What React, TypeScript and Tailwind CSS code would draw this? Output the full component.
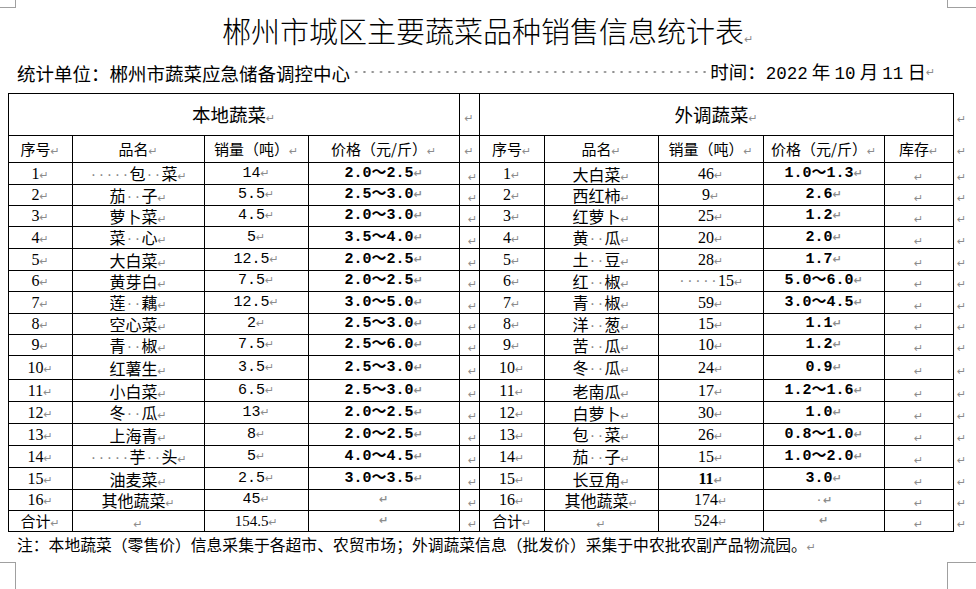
import React from "react"

const CN = "font-['Noto_Sans_CJK_SC',sans-serif]"
const SERIF = "font-['Liberation_Serif','Noto_Sans_CJK_SC',serif]"
const MONO = "font-['Liberation_Mono','Noto_Sans_CJK_SC',monospace]"

type Row = { no: string; name: string; qty: string; price: string; bold?: boolean }

const local: Row[] = [
  { no: "1", name: "·····包··菜", qty: "14", price: "2.0～2.5" },
  { no: "2", name: "茄··子", qty: "5.5", price: "2.5～3.0" },
  { no: "3", name: "萝卜菜", qty: "4.5", price: "2.0～3.0" },
  { no: "4", name: "菜··心", qty: "5", price: "3.5～4.0" },
  { no: "5", name: "大白菜", qty: "12.5", price: "2.0～2.5" },
  { no: "6", name: "黄芽白", qty: "7.5", price: "2.0～2.5" },
  { no: "7", name: "莲··藕", qty: "12.5", price: "3.0～5.0" },
  { no: "8", name: "空心菜", qty: "2", price: "2.5～3.0" },
  { no: "9", name: "青··椒", qty: "7.5", price: "2.5～6.0" },
  { no: "10", name: "红薯生", qty: "3.5", price: "2.5～3.0" },
  { no: "11", name: "小白菜", qty: "6.5", price: "2.5～3.0" },
  { no: "12", name: "冬··瓜", qty: "13", price: "2.0～2.5" },
  { no: "13", name: "上海青", qty: "8", price: "2.0～2.5" },
  { no: "14", name: "·····芋··头", qty: "5", price: "4.0～4.5" },
  { no: "15", name: "油麦菜", qty: "2.5", price: "3.0～3.5" },
  { no: "16", name: "其他蔬菜", qty: "45", price: "" },
  { no: "合计", name: "", qty: "154.5", price: "" },
]

const remote: Row[] = [
  { no: "1", name: "大白菜", qty: "46", price: "1.0～1.3" },
  { no: "2", name: "西红柿", qty: "9", price: "2.6" },
  { no: "3", name: "红萝卜", qty: "25", price: "1.2" },
  { no: "4", name: "黄··瓜", qty: "20", price: "2.0" },
  { no: "5", name: "土··豆", qty: "28", price: "1.7" },
  { no: "6", name: "红··椒", qty: "·····15", price: "5.0～6.0" },
  { no: "7", name: "青··椒", qty: "59", price: "3.0～4.5" },
  { no: "8", name: "洋··葱", qty: "15", price: "1.1" },
  { no: "9", name: "苦··瓜", qty: "10", price: "1.2" },
  { no: "10", name: "冬··瓜", qty: "24", price: "0.9" },
  { no: "11", name: "老南瓜", qty: "17", price: "1.2～1.6" },
  { no: "12", name: "白萝卜", qty: "30", price: "1.0" },
  { no: "13", name: "包··菜", qty: "26", price: "0.8～1.0" },
  { no: "14", name: "茄··子", qty: "15", price: "1.0～2.0" },
  { no: "15", name: "长豆角", qty: "11", price: "3.0", bold: true },
  { no: "16", name: "其他蔬菜", qty: "174", price: "·" },
  { no: "合计", name: "", qty: "524", price: "" },
]

const heights = [
  "h-[22px]", "h-[21px]", "h-[21px]", "h-[22px]", "h-[22px]", "h-[21px]", "h-[22px]", "h-[21px]", "h-[21px]",
  "h-[24px]", "h-[22px]", "h-[22px]", "h-[22px]", "h-[22px]", "h-[22px]", "h-[21px]", "h-[21px]",
]

function Mark() {
  return (
    <span className="inline-block w-[10px] text-left text-[11px] leading-none text-[#8c8c8c] font-['DejaVu_Sans',sans-serif]">
      ↵
    </span>
  )
}

// Word shows spaces as light dots
function Txt({ s }: { s: string }) {
  return (
    <>
      {s.split("").map((c, i) =>
        c === "·" ? (
          <span
            key={i}
            className="inline-block w-[8px] text-center leading-none font-['Liberation_Sans',sans-serif] font-normal text-[#8a8a8a]"
          >
            ·
          </span>
        ) : (
          <span key={i}>{c}</span>
        )
      )}
    </>
  )
}

const td = "border border-black text-center align-middle p-0 whitespace-nowrap"
const dig = "font-['Liberation_Mono',monospace] text-[17.5px]"

export default function App() {
  return (
    <div className={`relative w-[976px] h-[589px] bg-white text-black overflow-hidden ${CN}`}>
      {/* corner marks */}
      <div className="absolute left-0 top-0 w-[16px] h-[8px] border-r border-b border-[#a0a0a0]" />
      <div className="absolute left-[947px] top-0 w-[29px] h-[8px] border-l border-b border-[#a0a0a0]" />
      <div className="absolute left-0 top-[562px] w-[16px] h-[27px] border-r border-t border-[#a0a0a0]" />
      <div className="absolute left-[947px] top-[562px] w-[29px] h-[27px] border-l border-t border-[#a0a0a0]" />

      <div className="pt-[13px] text-center text-[29px] leading-[35px] font-light">
        郴州市城区主要蔬菜品种销售信息统计表
        <Mark />
      </div>

      <div className="mt-[11px] flex items-center pl-[17px] pr-[40px] text-[18.5px] leading-[24px]">
        <span>统计单位：郴州市蔬菜应急储备调控中心</span>
        <span className="flex-1 self-stretch bg-[radial-gradient(circle,#8a8a8a_0.9px,transparent_1.3px)] bg-[length:8.3px_24px] bg-repeat-x bg-[position:2px_1px]" />
        <span className="whitespace-nowrap">
          时间：<span className={dig}>2022</span> 年 <span className={dig}>10</span> 月{" "}
          <span className={dig}>11</span> 日
        </span>
        <Mark />
      </div>

      <table className="ml-[8px] mt-[7px] table-fixed border-collapse">
        <colgroup>
          <col className="w-[64px]" />
          <col className="w-[132px]" />
          <col className="w-[104px]" />
          <col className="w-[151px]" />
          <col className="w-[20px]" />
          <col className="w-[65px]" />
          <col className="w-[114px]" />
          <col className="w-[105px]" />
          <col className="w-[121px]" />
          <col className="w-[69px]" />
          <col className="w-[18px]" />
        </colgroup>
        <tbody>
          <tr className="h-[42px] text-[18.5px]">
            <td colSpan={4} className={td}>
              本地蔬菜
              <Mark />
            </td>
            <td className={td}>
              <Mark />
            </td>
            <td colSpan={5} className={td}>
              外调蔬菜
              <Mark />
            </td>
            <td className="p-0 pl-[3px] align-top pt-[8px]">
              <Mark />
            </td>
          </tr>
          <tr className="h-[27px] text-[15px]">
            {["序号", "品名", "销量（吨）", "价格（元/斤）"].map((h) => (
              <td key={"l" + h} className={td}>
                {h}
                <Mark />
              </td>
            ))}
            <td className={td}>
              <Mark />
            </td>
            {["序号", "品名", "销量（吨）", "价格（元/斤）", "库存"].map((h) => (
              <td key={"r" + h} className={td}>
                {h}
                <Mark />
              </td>
            ))}
            <td className="p-0 pl-[3px] align-middle">
              <Mark />
            </td>
          </tr>
          {local.map((l, i) => {
            const r = remote[i]
            const total = l.no === "合计"
            return (
              <tr key={i} className={`${heights[i]} text-[16px] leading-[18px]`}>
                <td className={`${td} ${total ? "text-[15px]" : SERIF}`}>
                  {l.no}
                  <Mark />
                </td>
                <td className={td}>
                  <Txt s={l.name} />
                  <Mark />
                </td>
                <td className={`${td} ${total ? SERIF : MONO} text-[15px]`}>
                  {l.qty}
                  <Mark />
                </td>
                <td className={`${td} ${MONO} text-[15px] font-bold`}>
                  {l.price}
                  <Mark />
                </td>
                <td className={`${td} text-right pr-[1px]`}>
                  <Mark />
                </td>
                <td className={`${td} ${total ? "text-[15px]" : SERIF}`}>
                  {r.no}
                  <Mark />
                </td>
                <td className={td}>
                  <Txt s={r.name} />
                  <Mark />
                </td>
                <td className={`${td} ${SERIF} ${r.bold ? "font-bold" : ""}`}>
                  <Txt s={r.qty} />
                  <Mark />
                </td>
                <td className={`${td} ${MONO} text-[15px] font-bold`}>
                  <Txt s={r.price} />
                  <Mark />
                </td>
                <td className={td}>
                  <Mark />
                </td>
                <td className="p-0 pl-[3px] align-middle">
                  <Mark />
                </td>
              </tr>
            )
          })}
        </tbody>
      </table>

      <div className="pl-[17px] pt-[2px] text-[15.8px] leading-[22px]">
        注：本地蔬菜（零售价）信息采集于各超市、农贸市场；外调蔬菜信息（批发价）采集于中农批农副产品物流园。
        <Mark />
      </div>
    </div>
  )
}
